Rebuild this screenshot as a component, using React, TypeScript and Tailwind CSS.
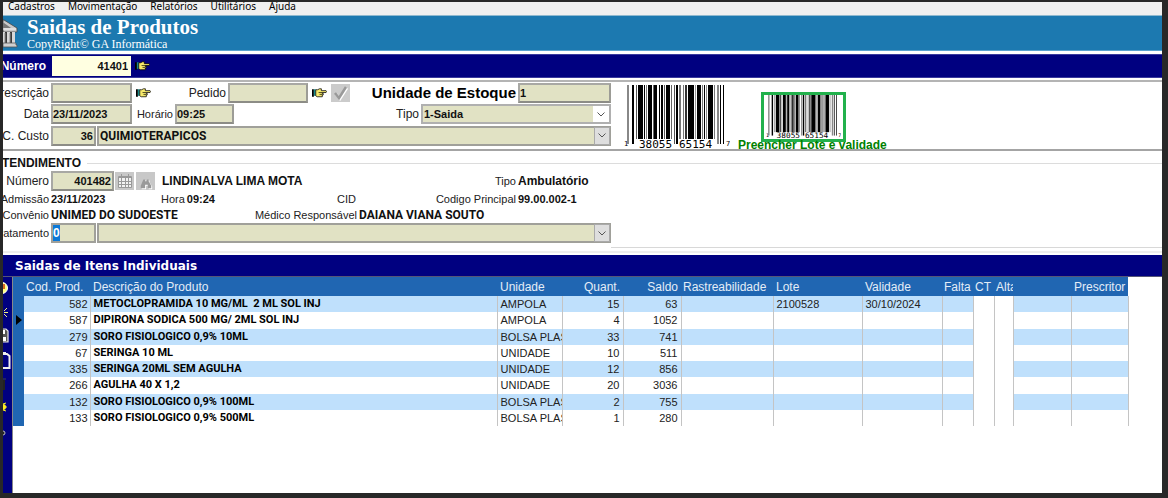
import type { InputHTMLAttributes, ReactNode } from "react";

type Item = {
  code: number;
  name: string;
  unit: string;
  qty: number;
  balance: number;
  lot?: string;
  expiry?: string;
};

const items: Item[] = [
  { code: 582, name: "METOCLOPRAMIDA 10 MG/ML  2 ML SOL INJ", unit: "AMPOLA", qty: 15, balance: 63, lot: "2100528", expiry: "30/10/2024" },
  { code: 587, name: "DIPIRONA SODICA 500 MG/ 2ML SOL INJ", unit: "AMPOLA", qty: 4, balance: 1052 },
  { code: 279, name: "SORO FISIOLOGICO 0,9% 10ML", unit: "BOLSA PLAST", qty: 33, balance: 741 },
  { code: 67, name: "SERINGA 10 ML", unit: "UNIDADE", qty: 10, balance: 511 },
  { code: 335, name: "SERINGA 20ML SEM AGULHA", unit: "UNIDADE", qty: 12, balance: 856 },
  { code: 266, name: "AGULHA 40 X 1,2", unit: "UNIDADE", qty: 20, balance: 3036 },
  { code: 132, name: "SORO FISIOLOGICO 0,9% 100ML", unit: "BOLSA PLAST", qty: 2, balance: 755 },
  { code: 133, name: "SORO FISIOLOGICO 0,9% 500ML", unit: "BOLSA PLAST", qty: 1, balance: 280 },
];

const bars: [number, number, string][] = [
  [3, 2, "#888"], [8, 2, "#000"], [12, 1, "#555"], [14, 5, "#000"], [20, 1, "#000"], [22, 1, "#777"],
  [24, 4, "#000"], [29, 1, "#666"], [30, 3, "#000"], [35, 1, "#000"], [37, 2, "#000"], [40, 1, "#555"],
  [42, 4, "#000"], [47, 1, "#666"], [50, 1, "#555"], [52, 2, "#000"], [55, 2, "#777"], [59, 1, "#777"],
  [61, 2, "#333"], [64, 6, "#000"], [71, 1, "#999"], [73, 4, "#000"], [78, 1, "#777"], [80, 1, "#000"],
  [82, 1, "#888"], [84, 5, "#000"], [90, 1, "#777"], [93, 2, "#888"], [96, 1, "#000"], [99, 1, "#000"],
];

function Barcode({ className }: { className: string }) {
  return (
    <svg viewBox="0 0 106 64" preserveAspectRatio="none" className={className} aria-label="Código de barras">
      {bars.map(([x, w, c]) => {
        const guard = x < 12 || (x > 48 && x < 54) || x > 90;
        return <rect key={x} x={x} y="0" width={w} height={guard ? 59 : 54} fill={c} />;
      })}
      <g fill="#000" fontFamily="'DejaVu Sans Mono', monospace" fontSize="11">
        <text x="0" y="61" fontSize="7">1</text>
        <text x="15" y="63">38055</text>
        <text x="55" y="63">65154</text>
        <text x="102" y="61" fontSize="7">7</text>
      </g>
    </svg>
  );
}

function Hand() {
  return (
    <svg viewBox="0 0 16 10" className="h-[10px] w-[15px]" aria-hidden="true">
      <path d="M0 1h2v8H0z" fill="#000" />
      <path d="M2 1h2v7H2z" fill="#168a8a" />
      <path d="M4 1.500h2L8 .5h2v2h5l.5 1-.5 1h-4v1h1v1.500h-1V9H5.500L4 8z" fill="#f6e96b" stroke="#000" strokeWidth=".8" />
      <path d="M7 4.500h4M8 6.500h3" stroke="#000" strokeWidth=".7" fill="none" />
    </svg>
  );
}

function HandButton({ label }: { label: string }) {
  return (
    <button type="button" aria-label={label} className="flex w-[22px] shrink-0 items-center justify-center">
      <Hand />
    </button>
  );
}

function Label({ htmlFor, className, children }: { htmlFor?: string; className: string; children: ReactNode }) {
  return (
    <label htmlFor={htmlFor} className={`flex shrink-0 justify-end overflow-hidden whitespace-nowrap pr-0.5 ${className}`}>
      <span>{children}</span>
    </label>
  );
}

function Field({ className = "", ...rest }: InputHTMLAttributes<HTMLInputElement>) {
  return (
    <input
      type="text"
      className={`h-5 shrink-0 border-2 border-t-[#a8a8a4] border-r-[#9c9c96] border-b-[#8c8c86] border-l-[#a8a8a4] bg-[#e1e2c4] pr-px text-[11px] font-bold text-[#111] outline-none ${className}`}
      {...rest}
    />
  );
}

function Chevron() {
  return (
    <svg viewBox="0 0 8 5" className="h-[5px] w-2" fill="none" stroke="#555" aria-hidden="true">
      <path d="M.5.500 4 4 7.500.500" />
    </svg>
  );
}

function Combo({ id, label, value }: { id: string; label: string; value: string }) {
  return (
    <div className="relative ml-px h-5 grow">
      <select
        id={id}
        aria-label={label}
        defaultValue={value}
        className="h-full w-full appearance-none border-2 border-[#a0a09a] bg-[#e1e2c4] pl-px font-[Roboto,sans-serif] text-[12px] leading-4 font-bold text-[#111] outline-none"
      >
        <option value={value}>{value}</option>
      </select>
      <span className="pointer-events-none absolute inset-y-px right-px flex w-4 items-center justify-center border border-[#aaa] bg-[#dedede]">
        <Chevron />
      </span>
    </div>
  );
}

const menus = ["Cadastros", "Movimentação", "Relatórios", "Utilitários", "Ajuda"];

function Logo() {
  return (
    <svg viewBox="0 0 15 30" className="h-[30px] w-[15px] shrink-0" aria-hidden="true">
      <path d="M0 2h1l13 8v4H0z" fill="#c9c9c9" stroke="#444" strokeWidth=".8" />
      <path d="M0 5h1l7 5H0z" fill="#777" />
      <path d="M0 11h13" stroke="#f5f5f5" />
      <path d="M0 14h12v11H0z" fill="#3a3a3a" />
      <path d="M0 14h2v11H0zM4 14h3v11H4zM9 14h3v11H9z" fill="#d8d8d8" />
      <path d="M2 15v10M7 15v10" stroke="#888" />
      <path d="M0 25h13v2h1v2H0z" fill="#d0d0d0" stroke="#555" strokeWidth=".8" />
    </svg>
  );
}

function ToolIcon({ label, children }: { label: string; children: ReactNode }) {
  return (
    <button type="button" aria-label={label} className="flex h-6 w-full items-center overflow-hidden">
      <svg viewBox="0 0 9 20" className="h-5 w-[9px]" aria-hidden="true">
        {children}
      </svg>
    </button>
  );
}

function Toolbar() {
  return (
    <nav aria-label="Ferramentas" className="w-[9px] shrink-0 bg-[#000080]">
      <ToolIcon label="Alerta">
        <circle cx="-1" cy="9" r="5.500" fill="#ffff80" stroke="#fff" />
        <path d="M0 5h2v5H0z" fill="#d66a20" />
      </ToolIcon>
      <ToolIcon label="Novo">
        <path d="M1 8 4 5M1 9.500h4M1 11l3 3" stroke="#f0f080" fill="none" />
      </ToolIcon>
      <ToolIcon label="Salvar">
        <path d="M-4 2h7l2 2v11H-4z" fill="#555" stroke="#e6e6e6" strokeWidth="1.200" />
        <path d="M0 3h2v4H0zM0 10h3v4H0z" fill="#fff" />
      </ToolIcon>
      <ToolIcon label="Copiar">
        <path d="M-2 3h6l2.500 2v12H-2" fill="#000080" stroke="#eee" strokeWidth="2" />
        <path d="M0 1h3v3H0z" fill="#eee" />
      </ToolIcon>
      <ToolIcon label="Excluir">
        <path d="M0 5h2v10H0z" fill="#222" />
        <path d="M0 4h3" stroke="#444" />
      </ToolIcon>
      <ToolIcon label="Configurar">
        <circle cx="0" cy="8" r="3" fill="#ffef20" />
        <path d="M0 8h4M0 5l3-1M0 11l3 1" stroke="#ffef20" />
      </ToolIcon>
      <ToolIcon label="Fechar">
        <circle cx="0" cy="10" r="2" fill="#222" stroke="#bbb" />
      </ToolIcon>
    </nav>
  );
}

const edge = "border-r border-[#c4c4c4]";

function ItemsTable() {
  const widths = [11, 66, 407, 65, 61, 58, 92, 89, 80, 31, 21, 19, 58, 57];
  return (
    <table className="h-[149px] w-[1115px] table-fixed border-collapse text-[11px] leading-4">
      <colgroup>
        {widths.map((w, i) => (
          <col key={i} style={{ width: w }} />
        ))}
      </colgroup>
      <thead>
        <tr className="h-[19px] bg-[#2066b2] text-left text-[12px] whitespace-nowrap text-[#e4edf7] [&>th]:overflow-hidden [&>th]:font-normal">
          <th aria-label="Seleção" />
          <th className="pl-0.5">Cod. Prod.</th>
          <th className="pl-[3px]">Descrição do Produto</th>
          <th className="pl-[3px]">Unidade</th>
          <th className="pr-[3px] text-right">Quant.</th>
          <th className="pr-[3px] text-right">Saldo</th>
          <th className="pl-0.5">Rastreabilidade</th>
          <th className="pl-[3px]">Lote</th>
          <th className="pl-[3px]">Validade</th>
          <th className="pl-0.5">Falta</th>
          <th className="pl-0.5">CT</th>
          <th className="pl-0.5">Alta</th>
          <th aria-label="Observação" />
          <th className="pl-[3px]">Prescritor</th>
        </tr>
      </thead>
      <tbody>
        {items.map((it, i) => (
          <tr
            key={it.code}
            className={`h-4 whitespace-nowrap text-[#222] [&>td]:overflow-hidden ${i % 2 === 0 ? "bg-[#bfe0fc]" : "bg-white"}`}
          >
            <td className="bg-[#2066b2]">
              {i === 1 && (
                <svg viewBox="0 0 6 10" className="ml-[3px] block h-[10px] w-1.5" aria-label="Linha atual">
                  <path d="M0 0 6 5 0 10z" fill="#000" />
                </svg>
              )}
            </td>
            <td className={`${edge} pr-0.5 text-right`}>{it.code}</td>
            <td className={`${edge} pl-[3px] font-[Roboto,sans-serif] font-bold whitespace-pre text-black`}>{it.name}</td>
            <td className={`${edge} pl-[3px]`}>{it.unit}</td>
            <td className={`${edge} pr-[3px] text-right`}>{it.qty}</td>
            <td className={`${edge} pr-[3px] text-right`}>{it.balance}</td>
            <td className={edge} />
            <td className={`${edge} pl-[3px]`}>{it.lot}</td>
            <td className={`${edge} pl-[3px]`}>{it.expiry}</td>
            <td className={edge} />
            <td className={`${edge} bg-white`} />
            <td className={`${edge} bg-white`} />
            <td className={edge} />
            <td className={edge} />
          </tr>
        ))}
      </tbody>
    </table>
  );
}

export default function App() {
  return (
    <div className="flex min-h-screen flex-col bg-[#282828] pt-0.5 pr-1.5 pb-[5px] pl-[3px] font-['Liberation_Sans',Arial,sans-serif] text-[12px] leading-4 text-[#222]">
      <div className="flex grow flex-col overflow-hidden bg-white">
        <nav className="flex h-[13px] items-end gap-[13px] overflow-hidden bg-[#f0f0f0] pl-[5px] font-['Noto_Sans',sans-serif] text-[10px] text-black">
          {menus.map((m) => (
            <button key={m} type="button" className="leading-[18px]">
              {m}
            </button>
          ))}
        </nav>

        <header className="flex h-9 items-center overflow-hidden border-y border-t-[#8fb9cf] border-b-[#5aa2cf] bg-[#1c79b0] font-['Liberation_Serif',serif] text-white">
          <div className="flex w-6 shrink-0">
            <Logo />
          </div>
          <div>
            <h1 className="text-[21px] leading-[22px] font-bold">Saidas de Produtos</h1>
            <p className="text-[12px] leading-3">CopyRight© GA Informática</p>
          </div>
        </header>

        <div className="mt-[3px] flex h-6 items-center border-y border-[#3a3a9e] bg-[#000080]">
          <Label htmlFor="numero" className="w-[49px] pr-1.5 text-[12px] font-bold text-white">
            Número
          </Label>
          <Field id="numero" defaultValue="41401" className="w-[79px] border-[#ffffe1]! bg-[#ffffe1]! text-right" />
          <HandButton label="Localizar número" />
        </div>

        <section className="mt-0.5 flex border-y-2 border-t-[#b4b4b4] border-b-[#a4a4a4]">
          <div className="flex w-[608px] shrink-0 flex-col gap-px pb-[3px]">
            <div className="flex h-[21px] items-center">
              <Label htmlFor="prescricao" className="w-12">
                Prescrição
              </Label>
              <Field id="prescricao" className="w-[81px]" />
              <HandButton label="Localizar prescrição" />
              <Label htmlFor="pedido" className="w-[74px]">
                Pedido
              </Label>
              <Field id="pedido" className="w-[80px]" />
              <HandButton label="Localizar pedido" />
              <button
                type="button"
                aria-label="Confirmar pedido"
                className="ml-px flex h-[18px] w-[19px] shrink-0 items-center justify-center bg-[#cbcbcb]"
              >
                <svg viewBox="0 0 16 16" className="size-4" fill="none" aria-hidden="true">
                  <path d="m3 9 4 5 7-11" stroke="#fff" strokeWidth="2.500" />
                  <path d="m2 8 4 5 7-11" stroke="#999" strokeWidth="2.500" />
                </svg>
              </button>
              <Label htmlFor="unidade" className="grow text-[15px] font-bold text-black">
                Unidade de Estoque
              </Label>
              <Field id="unidade" defaultValue="1" className="w-[93px]" />
            </div>
            <div className="flex h-5 items-center">
              <Label htmlFor="data" className="w-12">
                Data
              </Label>
              <Field id="data" defaultValue="23/11/2023" className="w-[81px]" />
              <Label htmlFor="horario" className="w-[43px] text-[11px]">
                Horário
              </Label>
              <Field id="horario" defaultValue="09:25" className="w-[59px]" />
              <Label htmlFor="tipo" className="grow">
                Tipo
              </Label>
              <div className="relative h-5 w-[190px] shrink-0">
                <select
                  id="tipo"
                  defaultValue="1-Saida"
                  className="h-full w-full appearance-none border-2 border-[#b0b0b0] bg-[#e1e2c4] pl-px text-[11px] leading-4 font-bold text-[#111] outline-none"
                >
                  <option value="1-Saida">1-Saida</option>
                </select>
                <span className="pointer-events-none absolute inset-y-0.5 right-0.5 flex w-4 items-center justify-center bg-white">
                  <Chevron />
                </span>
              </div>
            </div>
            <div className="flex h-[21px] items-center">
              <Label htmlFor="custo" className="w-12">
                C. Custo
              </Label>
              <Field id="custo" defaultValue="36" className="w-[45px] text-right" />
              <Combo id="custo-nome" label="Centro de custo" value="QUIMIOTERAPICOS" />
            </div>
          </div>
          <div className="flex items-start pt-[3px] pl-[13px]">
            <Barcode className="h-16 w-[106px]" />
            <div className="ml-2 flex flex-col items-start pt-[7px]">
              <div className="ml-[23px] flex h-[50px] w-[85px] justify-center border-[3px] border-[#22b14c] bg-white">
                <Barcode className="h-11 w-[75px]" />
              </div>
              <strong className="-mt-1 h-2.5 text-[12px] leading-[14px] whitespace-nowrap text-[#008000]">
                Preencher Lote e validade
              </strong>
            </div>
          </div>
        </section>

        <section className="flex flex-col pt-1">
          <div className="flex items-center gap-1.5">
            <div className="flex w-[78px] shrink-0 justify-end overflow-hidden">
              <h2 className="text-[12px] font-bold text-[#111]">ATENDIMENTO</h2>
            </div>
            <div className="h-px grow bg-[#dcdcdc]" />
          </div>
          <div className="flex w-[608px] flex-col">
            <div className="flex h-5 items-center">
              <Label htmlFor="atendimento" className="w-12">
                Número
              </Label>
              <Field id="atendimento" defaultValue="401482" className="w-[63px] text-right" />
              <button type="button" aria-label="Calendário" className="ml-px flex h-[18px] w-[19px] shrink-0 items-center justify-center bg-[#c8c8c8]">
                <svg viewBox="0 0 16 16" className="size-4" fill="none" stroke="#999" aria-hidden="true">
                  <path d="M1.500 3.500h13v11h-13z" fill="#f2f2f2" />
                  <path d="M1 4.500h14M1 8.500h14M1 11.500h14M4.500 5v9M8.500 5v9M11.500 5v9M4.500 1v3M11.500 1v3" />
                </svg>
              </button>
              <button type="button" aria-label="Pesquisar" className="ml-0.5 flex h-[18px] w-[19px] shrink-0 items-end justify-center bg-[#c8c8c8]">
                <svg viewBox="0 0 16 16" className="size-[14px]" aria-hidden="true">
                  <path d="M6 5h2v2h2V5h2v2l3 5v3h-4v-4H8v4H3v-3z" fill="#fff" />
                  <path d="M5 4h2v2h2V4h2v2l3 5v3h-4v-4H7v4H2v-3z" fill="#999" />
                </svg>
              </button>
              <strong className="ml-[7px] w-[200px] shrink-0 whitespace-nowrap text-[#111]">LINDINALVA LIMA MOTA</strong>
              <span className="flex grow justify-end pr-0.5 text-[11px]">Tipo</span>
              <strong className="w-[93px] shrink-0 text-[#111]">Ambulatório</strong>
            </div>
            <div className="flex h-4 items-center text-[11px]">
              <Label className="w-12">Admissão</Label>
              <strong className="w-[110px] shrink-0 text-[#111]">23/11/2023</strong>
              <span>Hora</span>
              <strong className="pl-0.5 text-[#111]">09:24</strong>
              <span className="flex grow justify-end">CID</span>
              <span className="flex w-[162px] shrink-0 justify-end pr-0.5">Codigo Principal</span>
              <strong className="w-[93px] shrink-0 text-[#111]">99.00.002-1</strong>
            </div>
            <div className="flex h-4 items-center text-[11px]">
              <Label className="w-12">Convênio</Label>
              <strong className="shrink-0 font-[Roboto,sans-serif] text-[12px] whitespace-nowrap text-[#111]">UNIMED DO SUDOESTE</strong>
              <span className="flex grow justify-end pr-0.5 whitespace-nowrap">Médico Responsável</span>
              <strong className="w-[252px] shrink-0 font-[Roboto,sans-serif] text-[12px] text-[#111]">DAIANA VIANA SOUTO</strong>
            </div>
            <div className="flex h-5 items-center">
              <Label htmlFor="tratamento" className="w-12 text-[11px]">
                Tratamento
              </Label>
              <div className="flex h-5 w-[45px] shrink-0 items-center border-2 border-[#a0a09a] bg-[#e1e2c4]">
                <input
                  id="tratamento"
                  type="text"
                  defaultValue="0"
                  className="h-4 w-[7px] bg-[#0a78d7] text-[12px] font-bold text-white outline-none"
                />
              </div>
              <Combo id="tratamento-nome" label="Tratamento" value="" />
            </div>
          </div>
          <div className="mt-1 ml-[608px] h-px bg-[#d8d8d8]" />
          <div className="mt-[3px] h-0.5 bg-[#eeeeee]" />
        </section>

        <section className="mt-0.5 flex grow flex-col">
          <h2 className="h-[22px] border-b border-[#555577] bg-[#000080] pl-3 font-['DejaVu_Sans',sans-serif] text-[12px] leading-[22px] font-bold text-white">
            Saidas de Itens Individuais
          </h2>
          <div className="flex grow">
            <Toolbar />
            <div className="grow border-l border-[#888]">
              <ItemsTable />
            </div>
          </div>
        </section>
      </div>
    </div>
  );
}
